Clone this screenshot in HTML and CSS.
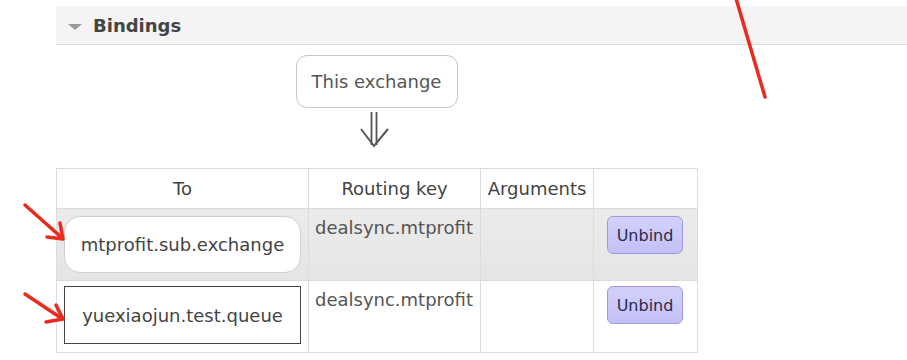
FILE: index.html
```html
<!DOCTYPE html>
<html>
<head>
<meta charset="utf-8">
<link rel="stylesheet" href="styles.css">
</head>
<body>
<div class="page">
  <div class="section-head">
    <span class="triangle"></span>
    <span class="title">Bindings</span>
  </div>
  <div class="diagram">
    <div class="source">This exchange</div>
    <svg class="arrow" width="30" height="38" viewBox="0 0 30 38">
      <line x1="11.5" y1="0" x2="11.5" y2="33" stroke="#555" stroke-width="1.8"/>
      <line x1="16.5" y1="0" x2="16.5" y2="33" stroke="#555" stroke-width="1.8"/>
      <polyline points="1,17 14,34 28,17" fill="none" stroke="#555" stroke-width="2" stroke-linejoin="miter"/>
    </svg>
  </div>
  <table class="bindings">
    <colgroup>
      <col class="c-to">
      <col class="c-key">
      <col class="c-args">
      <col class="c-act">
    </colgroup>
    <thead>
      <tr>
        <th>To</th>
        <th>Routing key</th>
        <th>Arguments</th>
        <th></th>
      </tr>
    </thead>
    <tbody>
      <tr class="alt">
        <td class="cell-to"><div class="dest exchange">mtprofit.sub.exchange</div></td>
        <td class="cell-key">dealsync.mtprofit</td>
        <td class="cell-args"></td>
        <td class="cell-act"><button class="unbind">Unbind</button></td>
      </tr>
      <tr class="plain">
        <td class="cell-to"><div class="dest queue">yuexiaojun.test.queue</div></td>
        <td class="cell-key">dealsync.mtprofit</td>
        <td class="cell-args"></td>
        <td class="cell-act"><button class="unbind">Unbind</button></td>
      </tr>
    </tbody>
  </table>

  <svg class="annot annot-top" width="60" height="110" viewBox="0 0 60 110">
    <line x1="15" y1="-5" x2="45" y2="97" stroke="#ea2a1e" stroke-width="3.5" stroke-linecap="round"/>
  </svg>
  <svg class="annot annot-1" width="50" height="45" viewBox="0 0 50 45">
    <line x1="4" y1="4" x2="40" y2="36" stroke="#ea2a1e" stroke-width="3.5" stroke-linecap="round"/>
    <polyline points="26,36 42,38 39,22" fill="none" stroke="#ea2a1e" stroke-width="3.5" stroke-linecap="round" stroke-linejoin="round"/>
  </svg>
  <svg class="annot annot-2" width="50" height="45" viewBox="0 0 50 45">
    <line x1="4" y1="6" x2="40" y2="30" stroke="#ea2a1e" stroke-width="3.5" stroke-linecap="round"/>
    <polyline points="25,34 42,31 35,17" fill="none" stroke="#ea2a1e" stroke-width="3.5" stroke-linecap="round" stroke-linejoin="round"/>
  </svg>
</div>
</body>
</html>
```

FILE: styles.css
```css
html, body {
  margin: 0;
  padding: 0;
  background: #ffffff;
}
body {
  font-family: "DejaVu Sans", Verdana, sans-serif;
  color: #444;
  width: 907px;
  height: 360px;
  overflow: hidden;
}
.page {
  position: relative;
  padding: 6px 0 0 56px;
}
.section-head {
  display: flex;
  align-items: center;
  height: 38px;
  background: #f4f4f4;
  border-bottom: 1px solid #dedede;
  padding-left: 12px;
}
.triangle {
  width: 0;
  height: 0;
  border-left: 7px solid transparent;
  border-right: 7px solid transparent;
  border-top: 6px solid #9a9a9a;
  margin-right: 11px;
  margin-top: 3px;
}
.title {
  font-weight: bold;
  font-size: 18px;
  color: #444;
}
.diagram {
  width: 641px;
  display: flex;
  flex-direction: column;
  align-items: center;
  padding-top: 10px;
}
.source {
  width: 162px;
  height: 53px;
  box-sizing: border-box;
  border: 1px solid #c8c8c8;
  border-radius: 11px;
  display: flex;
  align-items: center;
  justify-content: center;
  font-size: 18px;
  color: #555;
}
.arrow {
  display: block;
  margin-top: 4px;
  margin-left: -4px;
}
.bindings {
  border-collapse: collapse;
  table-layout: fixed;
  margin-top: 18px;
  width: 641px;
  font-size: 18px;
}
col.c-to { width: 252px; }
col.c-key { width: 172px; }
col.c-args { width: 113px; }
col.c-act { width: 104px; }
.bindings th, .bindings td {
  border: 1px solid #dcdcdc;
}
.bindings thead tr {
  height: 40px;
}
.bindings th {
  font-weight: normal;
  color: #444;
  text-align: center;
  padding: 0;
  background: #fff;
}
.bindings tbody tr {
  height: 72px;
}
.bindings td {
  vertical-align: top;
  padding: 0;
  color: #555;
}
.bindings td.cell-key {
  padding: 8px 0 0 6px;
  white-space: nowrap;
}
.bindings tr.alt td {
  background: linear-gradient(#ebebeb, #e5e5e5);
}
.bindings td.cell-to {
  padding: 7px 0 0 7px;
}
.dest {
  box-sizing: border-box;
  width: 237px;
  display: flex;
  align-items: center;
  justify-content: center;
  color: #444;
  font-size: 18px;
  background: #fff;
}
.dest.exchange {
  height: 57px;
  border: 1px solid #cfcfcf;
  border-radius: 16px;
}
.dest.queue {
  height: 58px;
  margin-top: -2px;
  border: 1px solid #444;
}
.bindings td.cell-act {
  padding: 7px 0 0 13px;
}
.bindings tr.plain td.cell-act {
  padding-top: 5px;
}
.unbind {
  display: block;
  font-family: "DejaVu Sans", Verdana, sans-serif;
  font-size: 16px;
  color: #2a2a4a;
  background: linear-gradient(#d3d1fb, #c3c0f6);
  border: 1px solid #9e9ae0;
  border-radius: 6px;
  width: 76px;
  height: 38px;
  padding: 0;
}
.annot {
  position: absolute;
  overflow: visible;
}
.annot-top { left: 720px; top: 0; }
.annot-1 { left: 21px; top: 201px; }
.annot-2 { left: 21px; top: 288px; }
```
